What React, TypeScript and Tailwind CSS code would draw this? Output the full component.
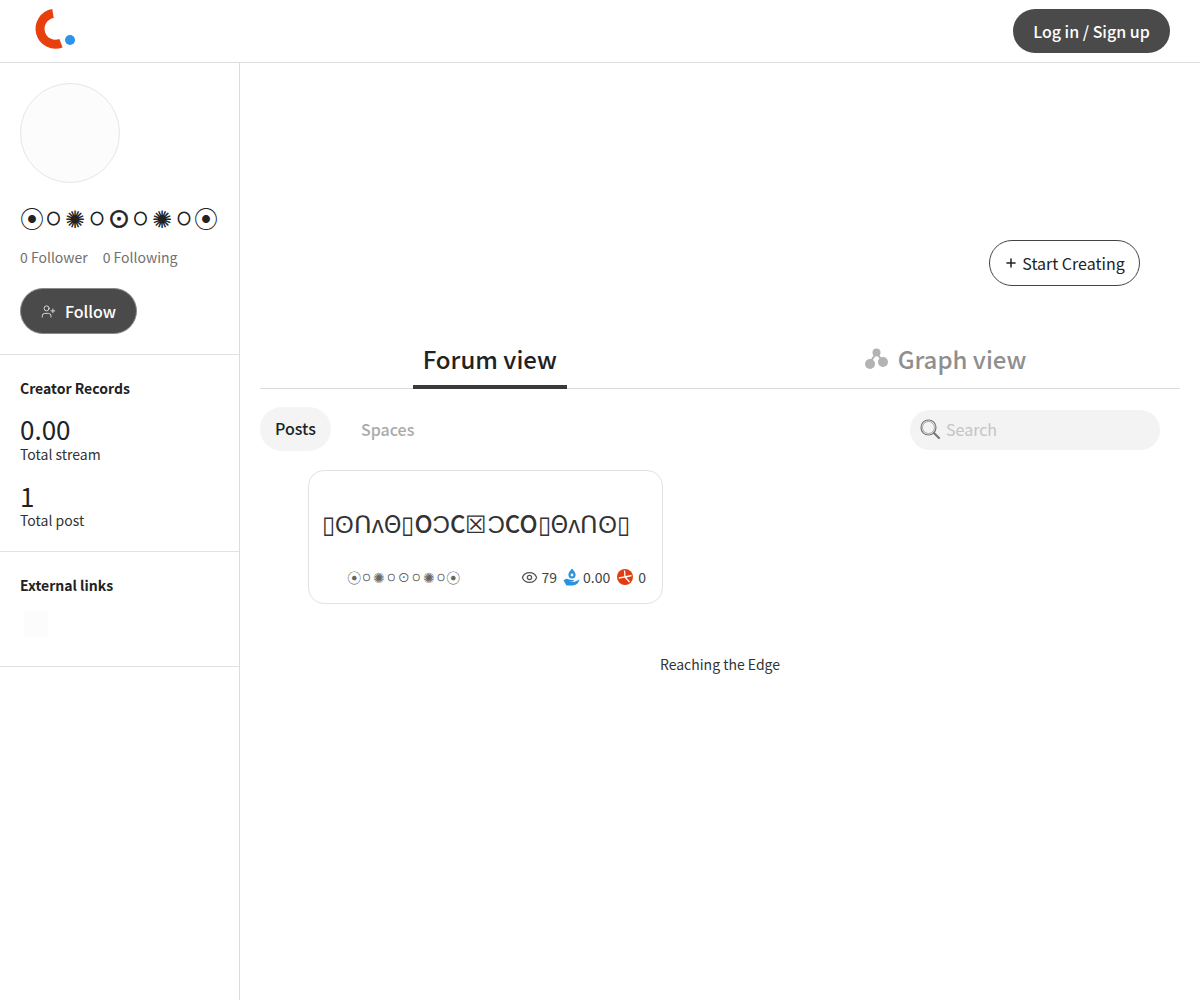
import React from 'react';
import { Plus, UserPlus, Eye } from 'lucide-react';

const font = "font-['Noto_Sans_CJK_SC','Noto_Sans_CJK_JP',sans-serif]";

const Logo = () => (
  <svg width="44" height="44" viewBox="0 0 44 44" fill="none">
    <path d="M22 4.5 A15.5 15.5 0 1 0 30 34.3" stroke="#e8400c" strokeWidth="9" />
    <circle cx="39" cy="31" r="5" fill="#2a93ee" />
  </svg>
);

const GraphIcon = () => (
  <svg width="24" height="24" viewBox="0 0 24 24" fill="#b3b3b3">
    <circle cx="11.5" cy="5.5" r="4" />
    <circle cx="5" cy="17" r="5" />
    <circle cx="18" cy="15" r="5" />
    <path d="M10 8 L6 14 M13 8 L16 12" stroke="#b3b3b3" strokeWidth="2" />
  </svg>
);

const SearchIcon = () => (
  <svg width="22" height="22" viewBox="0 0 22 22" fill="none" stroke="#777">
    <circle cx="9.5" cy="9.5" r="7.5" strokeWidth="1.2" />
    <circle cx="9.5" cy="9.5" r="6" strokeWidth="0.6" />
    <path d="M15 15 L20 20" strokeWidth="2.2" strokeLinecap="round" />
  </svg>
);

const StreamIcon = () => (
  <svg width="17" height="18" viewBox="0 0 17 18" fill="#2a93e0">
    <path d="M9 0.5 C11 3 12.6 4.6 12.6 6.8 A3.6 3.6 0 0 1 5.4 6.8 C5.4 4.6 7 3 9 0.5 Z" />
    <circle cx="9" cy="7" r="1.4" fill="#fff" />
    <path d="M0.5 12.5 L3 10.8 C5 10.4 6.5 12 8.5 12 L11 12 L10.5 13.2 L6.5 13.2 L11 14 L16.5 11.5 C16 14.5 13 17.5 9.5 17.5 L3.5 17.5 Z" />
  </svg>
);

const PinIcon = () => (
  <svg width="16" height="16" viewBox="0 0 16 16">
    <circle cx="8" cy="8" r="8" fill="#e23d12" />
    <path d="M7.5 1.5 L8 8 L1.8 9 M8 8 L12.5 13 M8 8 L14.5 6.5" stroke="#fff" strokeWidth="1.3" fill="none" />
  </svg>
);

const big: Record<string, string> = {
  '⦿': 'text-2xl',
  '○': 'text-[13px] [-webkit-text-stroke:1px_#222]',
  '✺': 'text-2xl',
  '☉': 'text-[28px] [-webkit-text-stroke:0.6px_#222]',
};
const small: Record<string, string> = {
  '⦿': 'text-sm',
  '○': 'text-[7px] [-webkit-text-stroke:0.5px_#666]',
  '✺': 'text-sm',
  '☉': 'text-[15px]',
};
const NAME = ['⦿', '○', '✺', '○', '☉', '○', '✺', '○', '⦿'];

const Name = ({ sizes, cell }: { sizes: Record<string, string>; cell: string }) => (
  <div className="flex items-center whitespace-nowrap">
    {NAME.map((g, i) => (
      <span key={i} className={`${cell} shrink-0 flex justify-center ${sizes[g]}`}>{g}</span>
    ))}
  </div>
);

export default function App() {
  return (
    <div className={`${font} min-h-[1000px] bg-white text-[#222] flex flex-col`}>
      <header className="h-[63px] border-b border-[#dcdcdc] flex items-center justify-between pl-[31px] pr-[30px]">
        <Logo />
        <button className="h-11 w-[157px] rounded-full bg-[#4a4a4a] text-white text-base font-medium">
          Log in / Sign up
        </button>
      </header>

      <div className="flex flex-1">
        <aside className="w-[240px] shrink-0 border-r border-[#dcdcdc]">
          <div className="h-[292px] border-b border-[#e2e2e2] px-5 pt-5">
            <div className="w-[100px] h-[100px] rounded-full border border-[#e6e6e6] bg-[#fcfcfc]" />
            <div className="mt-[17px] ml-[1px] h-9 flex items-center">
              <Name sizes={big} cell="w-[21.75px] leading-9" />
            </div>
            <div className="mt-[9px] flex gap-[15px] text-sm leading-6 text-[#707070]">
              <span>0 Follower</span>
              <span>0 Following</span>
            </div>
            <button className="mt-[19px] h-[46px] w-[117px] rounded-full bg-[#4a4a4a] border border-[#8a8a8a] text-white text-base font-medium flex items-center justify-center gap-[9px]">
              <UserPlus size={15} strokeWidth={1.2} />
              Follow
            </button>
          </div>

          <div className="h-[197px] border-b border-[#e2e2e2] px-5 pt-[23px]">
            <h3 className="text-sm leading-5 font-bold">Creator Records</h3>
            <div className="mt-[18px] text-[26px] leading-[26px]">0.00</div>
            <div className="mt-[2px] text-sm leading-5 text-[#333]">Total stream</div>
            <div className="mt-[19px] text-[26px] leading-[26px]">1</div>
            <div className="mt-[1px] text-sm leading-5 text-[#333]">Total post</div>
          </div>

          <div className="h-[115px] border-b border-[#e2e2e2] px-5 pt-[23px]">
            <h3 className="text-sm leading-5 font-bold">External links</h3>
            <div className="mt-[15px] ml-1 w-6 h-7 bg-[#fcfcfc]" />
          </div>
        </aside>

        <main className="flex-1 px-5">
          <div className="h-[223px] flex items-end justify-end pr-10">
            <button className="h-[46px] w-[151px] rounded-full border border-[#444] bg-white text-base flex items-center justify-center gap-1">
              <Plus size={14} strokeWidth={2.6} />
              Start Creating
            </button>
          </div>

          <div className="mt-[50px] flex border-b border-[#dcdcdc] h-[53px]">
            <div className="flex-1 flex justify-center">
              <div className="w-[154px] h-[53px] ml-[2.5px] border-b-4 border-[#3a3a3a] text-center text-2xl leading-[45px] font-medium">
                Forum view
              </div>
            </div>
            <div className="flex-1 flex justify-center pr-[6px]">
              <div className="flex items-center gap-[9px] h-[45px] text-2xl font-medium text-[#8f8f8f]">
                <GraphIcon />
                Graph view
              </div>
            </div>
          </div>

          <div className="mt-[18px] flex items-center justify-between pr-5">
            <div className="flex items-center gap-[30px]">
              <div className="w-[71px] h-11 rounded-full bg-[#f4f4f4] text-center text-base font-medium leading-[42px]">
                Posts
              </div>
              <div className="text-base font-medium text-[#aaa]">Spaces</div>
            </div>
            <div className="w-[250px] h-10 mt-[2px] pb-[2px] rounded-full bg-[#f3f3f3] flex items-center gap-[5px] pl-[9px] text-base text-[#c4c4c4]">
              <SearchIcon />
              Search
            </div>
          </div>

          <div className="mt-[19px] ml-12 w-[355px] h-[134px] rounded-2xl border border-[#e2e2e2] pl-[13px] pr-4 flex flex-col">
            <div className="mt-[34px] h-9 text-[24px] leading-9 text-[#333] whitespace-nowrap">
              ▯ʘՈʌΘ▯<span className="font-medium">OƆC</span>☒<span className="font-medium">ƆCO</span>▯ΘʌՈʘ▯
            </div>
            <div className="mt-[26px] flex items-center justify-between">
              <div className="ml-[26px] text-[#666]">
                <Name sizes={small} cell="w-[12.4px] leading-5" />
              </div>
              <div className="flex items-center text-sm text-[#444]">
                <Eye size={17} strokeWidth={1.8} className="text-[#555] mr-[3px]" />
                <span>79</span>
                <span className="ml-[6px] mr-[3px]"><StreamIcon /></span>
                <span>0.00</span>
                <span className="ml-[7px] mr-[5px]"><PinIcon /></span>
                <span>0</span>
              </div>
            </div>
          </div>

          <div className="mt-[50px] text-center text-sm leading-5 text-[#333]">Reaching the Edge</div>
        </main>
      </div>
    </div>
  );
}
